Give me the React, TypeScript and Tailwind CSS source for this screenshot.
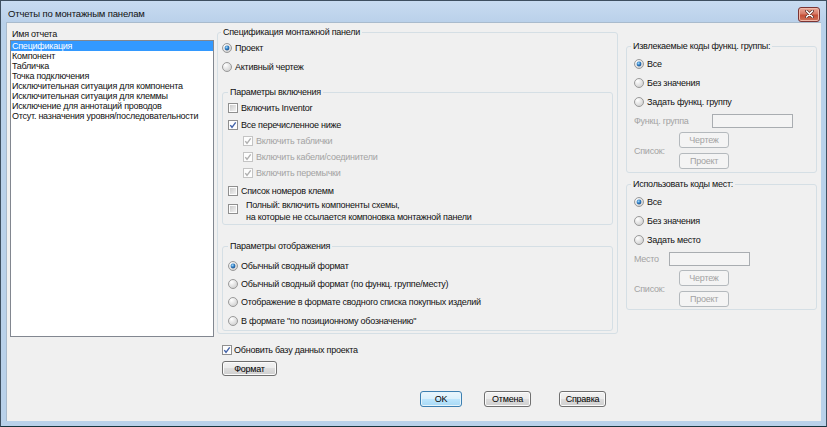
import React from "react";

function Radio({ checked }: { checked?: boolean }) {
  return (
    <svg width="10" height="10" viewBox="0 0 10 10" className="block shrink-0">
      <defs>
        <radialGradient id="rfill" cx="35%" cy="30%" r="75%">
          <stop offset="0" stopColor="#ffffff" />
          <stop offset="1" stopColor="#cfcfcf" />
        </radialGradient>
        <radialGradient id="rdot" cx="40%" cy="35%" r="70%">
          <stop offset="0" stopColor="#a8dcfa" />
          <stop offset="0.55" stopColor="#2b7ac2" />
          <stop offset="1" stopColor="#1b4a80" />
        </radialGradient>
      </defs>
      <circle cx="5" cy="5" r="4.5" fill="url(#rfill)" stroke="#9a9a9a" strokeWidth="1" />
      {checked && <circle cx="5" cy="5" r="2.4" fill="url(#rdot)" />}
    </svg>
  );
}

function Check({ checked, disabled }: { checked?: boolean; disabled?: boolean }) {
  return (
    <svg width="10" height="10" viewBox="0 0 10 10" className="block shrink-0">
      <defs>
        <linearGradient id="cgrad" x1="0" y1="0" x2="1" y2="1">
          <stop offset="0" stopColor="#cbcbcb" />
          <stop offset="1" stopColor="#f2f2f2" />
        </linearGradient>
      </defs>
      <rect x="0.5" y="0.5" width="9" height="9" fill="#fdfdfd" stroke={disabled ? "#c4c4c4" : "#8f8f8f"} />
      {!checked && <rect x="2" y="2" width="6" height="6" fill={disabled ? "#eeeeee" : "url(#cgrad)"} />}
      {checked && (
        <path
          d="M2.3 5.1 L4 7.3 L7.7 2.3"
          fill="none"
          stroke={disabled ? "#b0b0b0" : "#4262a8"}
          strokeWidth="1.4"
        />
      )}
    </svg>
  );
}

function Group({
  title,
  legendClass,
  className,
  children,
}: {
  title: string;
  legendClass: string;
  className?: string;
  children: React.ReactNode;
}) {
  return (
    <fieldset className={`border border-[#d5dfe5] rounded-[3px] p-0 m-0 min-w-0 ${className ?? ""}`}>
      <legend className={`px-[2px] h-[13px] leading-[13px] ${legendClass}`}>{title}</legend>
      {children}
    </fieldset>
  );
}

function WinButton({
  label,
  className,
  disabled,
  primary,
}: {
  label: string;
  className: string;
  disabled?: boolean;
  primary?: boolean;
}) {
  const style = disabled
    ? "border-[#b4b9bd] bg-[#f4f4f4] text-[#a3a3a3]"
    : primary
    ? "border-[#3c7fb1] bg-[linear-gradient(to_bottom,#eaf6fd_0%,#d9f0fc_50%,#bee6fd_50%,#a7d9f5_100%)] text-black shadow-[inset_0_0_0_1px_#e6f4fb]"
    : "border-[#707070] bg-[linear-gradient(to_bottom,#f2f2f2_0%,#ebebeb_50%,#dddddd_50%,#cfcfcf_100%)] text-black shadow-[inset_0_0_0_1px_#fbfbfb]";
  return (
    <div
      className={`flex items-center justify-center rounded-[3px] border ${style} ${className}`}
    >
      {label}
    </div>
  );
}

function RadioRow({ label, checked, h, pl }: { label: string; checked?: boolean; h: string; pl?: string }) {
  return (
    <div className={`flex items-center gap-[3px] ${h} ${pl ?? ""}`}>
      <Radio checked={checked} />
      <span>{label}</span>
    </div>
  );
}

function CheckRow({
  label,
  checked,
  disabled,
  h,
  pl,
}: {
  label: string;
  checked?: boolean;
  disabled?: boolean;
  h: string;
  pl?: string;
}) {
  return (
    <div className={`flex items-center gap-[3px] ${h} ${pl ?? ""} ${disabled ? "text-[#a3a3a3]" : ""}`}>
      <Check checked={checked} disabled={disabled} />
      <span>{label}</span>
    </div>
  );
}

const reports = [
  "Спецификация",
  "Компонент",
  "Табличка",
  "Точка подключения",
  "Исключительная ситуация для компонента",
  "Исключительная ситуация для клеммы",
  "Исключение для аннотаций проводов",
  "Отсут. назначения уровня/последовательности",
];

export default function App() {
  return (
    <div className="w-[827px] h-[427px] overflow-hidden bg-[#b9d1ea] border border-[#3e4f60] border-b-[#17343e] flex flex-col font-['Liberation_Sans',Arial,sans-serif] text-[#111111]">
      {/* title bar */}
      <div className="h-[21px] shrink-0 flex items-center justify-between pl-[7px] pr-[6px] bg-[linear-gradient(to_bottom,#c8dbf1,#bad1ea)]">
        <span className="text-[9.5px] leading-none pt-[5px] tracking-[-0.15px]">Отчеты по монтажным панелам</span>
        <div className="mt-[5px] w-[22px] h-[15px] rounded-[3px] border border-[#7a3434] bg-[linear-gradient(to_bottom,#e9a99a_0%,#d77a66_45%,#c44e36_55%,#d0735a_100%)] flex items-center justify-center shadow-[inset_0_0_0_1px_#f0b8a8]">
          <svg width="9" height="8" viewBox="0 0 9 8">
            <path d="M1.5 1 L7.5 7 M7.5 1 L1.5 7" stroke="#5a2a22" strokeWidth="3" strokeLinecap="round" />
            <path d="M1.5 1 L7.5 7 M7.5 1 L1.5 7" stroke="#ffffff" strokeWidth="1.6" strokeLinecap="round" />
          </svg>
        </div>
      </div>

      {/* content */}
      <div className="mx-[5px] mb-[5px] flex-1 bg-[#f0f0f0] border-l border-t border-[#a9bbcd] flex text-[9px] leading-[10px] tracking-[-0.25px]">
        {/* left column */}
        <div className="ml-[3px] w-[204px] flex flex-col">
          <div className="pt-[6px] h-[17px] pl-[2px] flex items-end pb-[1px]">Имя отчета</div>
          <div className="h-[297px] bg-white border border-[#828790]">
            {reports.map((r, i) => (
              <div
                key={r}
                className={`h-[10px] pl-[1px] leading-[10px] whitespace-nowrap ${
                  i === 0 ? "bg-[#3399ff] text-white" : ""
                }`}
              >
                {r}
              </div>
            ))}
          </div>
        </div>

        {/* middle column */}
        <div className="ml-[3px] w-[401px] flex flex-col pt-[3px]">
          <Group title="Спецификация монтажной панели" legendClass="ml-[3px]">
            <div className="px-[4px] pb-[2px]">
              <RadioRow label="Проект" checked h="h-[18px]" />
              <RadioRow label="Активный чертеж" h="h-[19px]" />
              <Group title="Параметры включения" legendClass="ml-[5px]" className="mt-[10px]">
                <div className="pl-[5px]">
                  <CheckRow label="Включить Inventor" h="h-[18px]" />
                  <CheckRow label="Все перечисленное ниже" checked h="h-[16px]" />
                  <CheckRow label="Включить таблички" checked disabled h="h-[16px]" pl="pl-[15px]" />
                  <CheckRow label="Включить кабели/соединители" checked disabled h="h-[16px]" pl="pl-[15px]" />
                  <CheckRow label="Включить перемычки" checked disabled h="h-[16px]" pl="pl-[15px]" />
                  <CheckRow label="Список номеров клемм" h="h-[16px]" pl="mt-[2px]" />
                  <div className="flex h-[25px]">
                    <div className="pt-[5px]">
                      <Check />
                    </div>
                    <div className="pl-[8px] leading-[12px]">
                      <div>Полный: включить компоненты схемы,</div>
                      <div>на которые не ссылается компоновка монтажной панели</div>
                    </div>
                  </div>
                </div>
              </Group>
              <Group title="Параметры отображения" legendClass="ml-[5px]" className="mt-[15px]">
                <div className="pl-[5px] pt-[3px]">
                  <RadioRow label="Обычный сводный формат" checked h="h-[19px]" />
                  <RadioRow label="Обычный сводный формат (по функц. группе/месту)" h="h-[18px]" />
                  <RadioRow label="Отображение в формате сводного списка покупных изделий" h="h-[18px]" />
                  <RadioRow label="В формате &quot;по позиционному обозначению&quot;" h="h-[19px]" />
                </div>
              </Group>
            </div>
          </Group>
          <div className="pl-[5px] mt-[8px]">
            <div className="flex items-center gap-[2px] h-[16px]">
              <Check checked />
              <span>Обновить базу данных проекта</span>
            </div>
            <WinButton label="Формат" className="mt-[3px] w-[55px] h-[15px]" />
          </div>
          <div className="flex mt-[15px] pl-[203px]">
            <WinButton label="OK" primary className="w-[42px] h-[16px]" />
            <WinButton label="Отмена" className="ml-[22px] w-[47px] h-[16px]" />
            <WinButton label="Справка" className="ml-[28px] w-[47px] h-[16px]" />
          </div>
        </div>

        {/* right column */}
        <div className="ml-[8px] w-[191px] flex flex-col pt-[17px]">
          <Group title="Извлекаемые коды функц. группы:" legendClass="ml-[4px]">
            <div className="pl-[7px] pt-[2px] pb-[3px]">
              <RadioRow label="Все" checked h="h-[18px]" />
              <RadioRow label="Без значения" h="h-[19px]" />
              <RadioRow label="Задать функц. группу" h="h-[19px]" />
              <div className="flex items-center h-[16px] mt-[2px] text-[#a3a3a3]">
                <span className="w-[78px]">Функц. группа</span>
                <div className="w-[81px] h-[14px] border border-[#a9adb1] bg-[#f4f4f4]" />
              </div>
              <div className="flex items-center mt-[3px] text-[#a3a3a3]">
                <span className="w-[45px]">Список:</span>
                <div className="flex flex-col gap-[5px]">
                  <WinButton label="Чертеж" disabled className="w-[50px] h-[16px]" />
                  <WinButton label="Проект" disabled className="w-[50px] h-[16px]" />
                </div>
              </div>
            </div>
          </Group>
          <Group title="Использовать коды мест:" legendClass="ml-[4px]" className="mt-[5px]">
            <div className="pl-[7px] pt-[1px] pb-[2px]">
              <RadioRow label="Все" checked h="h-[19px]" />
              <RadioRow label="Без значения" h="h-[19px]" />
              <RadioRow label="Задать место" h="h-[19px]" />
              <div className="flex items-center h-[16px] mt-[2px] text-[#a3a3a3]">
                <span className="w-[35px]">Место</span>
                <div className="w-[81px] h-[14px] border border-[#a9adb1] bg-[#f4f4f4]" />
              </div>
              <div className="flex items-center mt-[3px] text-[#a3a3a3]">
                <span className="w-[45px]">Список:</span>
                <div className="flex flex-col gap-[5px]">
                  <WinButton label="Чертеж" disabled className="w-[50px] h-[16px]" />
                  <WinButton label="Проект" disabled className="w-[50px] h-[16px]" />
                </div>
              </div>
            </div>
          </Group>
        </div>
      </div>
    </div>
  );
}
